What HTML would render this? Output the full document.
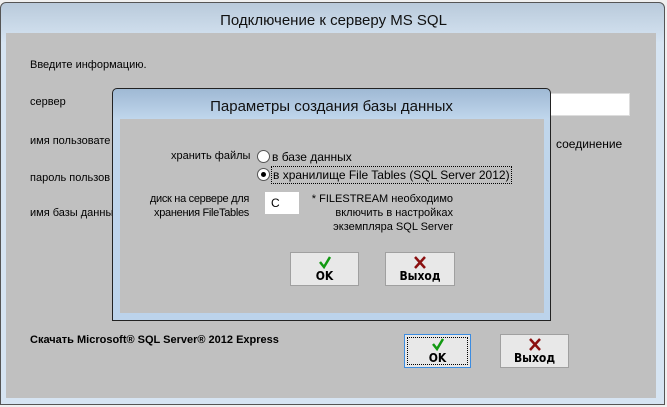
<!DOCTYPE html>
<html><head><meta charset="utf-8"><style>
*{margin:0;padding:0;box-sizing:border-box}
body{width:667px;height:407px;background:#f0f0f0;position:relative;overflow:hidden;font-family:"Liberation Sans",sans-serif;font-size:11px;color:#000}
.abs{position:absolute}
.frame{left:0;top:2px;width:665px;height:403px;border:1px solid #555;border-radius:6px 6px 0 0;background:linear-gradient(#b9cadb,#d6e4f2 40px,#d6e4f2)}
.client{left:6px;top:33px;width:650px;height:365px;background:#c0c0c0}
.t{white-space:nowrap}
.btn{background:#e8e8e8;border:1px solid #a0a0a0;text-align:center;font-weight:bold;font-size:12px;font-family:"DejaVu Sans Condensed","Liberation Sans Narrow",sans-serif}
.btn svg{display:block;margin:3px auto 0}
.rad{width:13px;height:13px;border-radius:50%;border:1px solid #555;background:#fff}
</style></head><body>
<div class="abs frame"></div>
<div class="abs t" style="left:0;width:667px;top:12px;text-align:center;font-size:15px;color:#111">Подключение к серверу MS SQL</div>
<div class="abs client"></div>
<div class="abs t" style="left:30px;top:59px">Введите информацию.</div>
<div class="abs t" style="left:30px;top:96px">сервер</div>
<div class="abs t" style="left:30px;top:135px">имя пользовате</div>
<div class="abs t" style="left:30px;top:172px">пароль пользов</div>
<div class="abs t" style="left:30px;top:207px">имя базы данны</div>
<div class="abs" style="left:549px;top:93px;width:81px;height:23px;background:#fff;border:1px solid #ddd"></div>
<div class="abs t" style="left:556px;top:137px;font-size:12px">соединение</div>
<div class="abs t" style="left:30px;top:334px;font-weight:bold;font-size:11px">Скачать Microsoft® SQL Server® 2012 Express</div>
<div class="abs btn" style="left:404px;top:334px;width:67px;height:34px;border:1px solid #3c8ce0"><div style="position:absolute;inset:2px;border:1px dotted #000"></div><svg width="14" height="13" viewBox="0 0 14 13"><path d="M2 6 L6 11 L12 1" stroke="#119911" stroke-width="2.5" fill="none"/></svg>OK</div>
<div class="abs btn" style="left:500px;top:334px;width:69px;height:34px"><svg width="14" height="13" viewBox="0 0 14 13"><path d="M2 1 L12 12 M12 1 L2 12" stroke="#8b1010" stroke-width="2.5"/></svg>Выход</div>

<div class="abs" style="left:112px;top:88px;width:439px;height:233px;border:1px solid #222;border-radius:5px 5px 0 0;background:linear-gradient(#9fb9d4,#c0d6ec 30px,#bcd3eb)"></div>
<div class="abs t" style="left:112px;width:439px;top:98px;text-align:center;font-size:15px;color:#111">Параметры создания базы данных</div>
<div class="abs" style="left:120px;top:119px;width:424px;height:194px;background:#c0c0c0"></div>
<div class="abs t" style="left:171px;top:150px">хранить файлы</div>
<div class="abs rad" style="left:257px;top:150px"></div>
<div class="abs t" style="left:272px;top:150px;font-size:12px">в базе данных</div>
<div class="abs rad" style="left:257px;top:168px"></div>
<div class="abs" style="left:261px;top:172px;width:5px;height:5px;border-radius:50%;background:#000"></div>
<div class="abs t" style="left:271px;top:166px;font-size:12px;border:1px dotted #000;padding:1px 1px">в хранилище File Tables (SQL Server 2012)</div>
<div class="abs t" style="left:110px;top:192px;width:139px;text-align:right;line-height:14px;letter-spacing:-0.3px">диск на сервере для<br>хранения FileTables</div>
<div class="abs" style="left:265px;top:192px;width:34px;height:22px;background:#fff"></div>
<div class="abs t" style="left:271px;top:196px;font-size:12px">C</div>
<div class="abs t" style="left:290px;top:192px;width:163px;text-align:right;line-height:14px">* FILESTREAM необходимо<br>включить в настройках<br>экземпляра SQL Server</div>
<div class="abs btn" style="left:290px;top:252px;width:69px;height:34px"><svg width="14" height="13" viewBox="0 0 14 13"><path d="M2 6 L6 11 L12 1" stroke="#119911" stroke-width="2.5" fill="none"/></svg>OK</div>
<div class="abs btn" style="left:385px;top:252px;width:70px;height:34px"><svg width="14" height="13" viewBox="0 0 14 13"><path d="M2 1 L12 12 M12 1 L2 12" stroke="#8b1010" stroke-width="2.5"/></svg>Выход</div>
</body></html>
